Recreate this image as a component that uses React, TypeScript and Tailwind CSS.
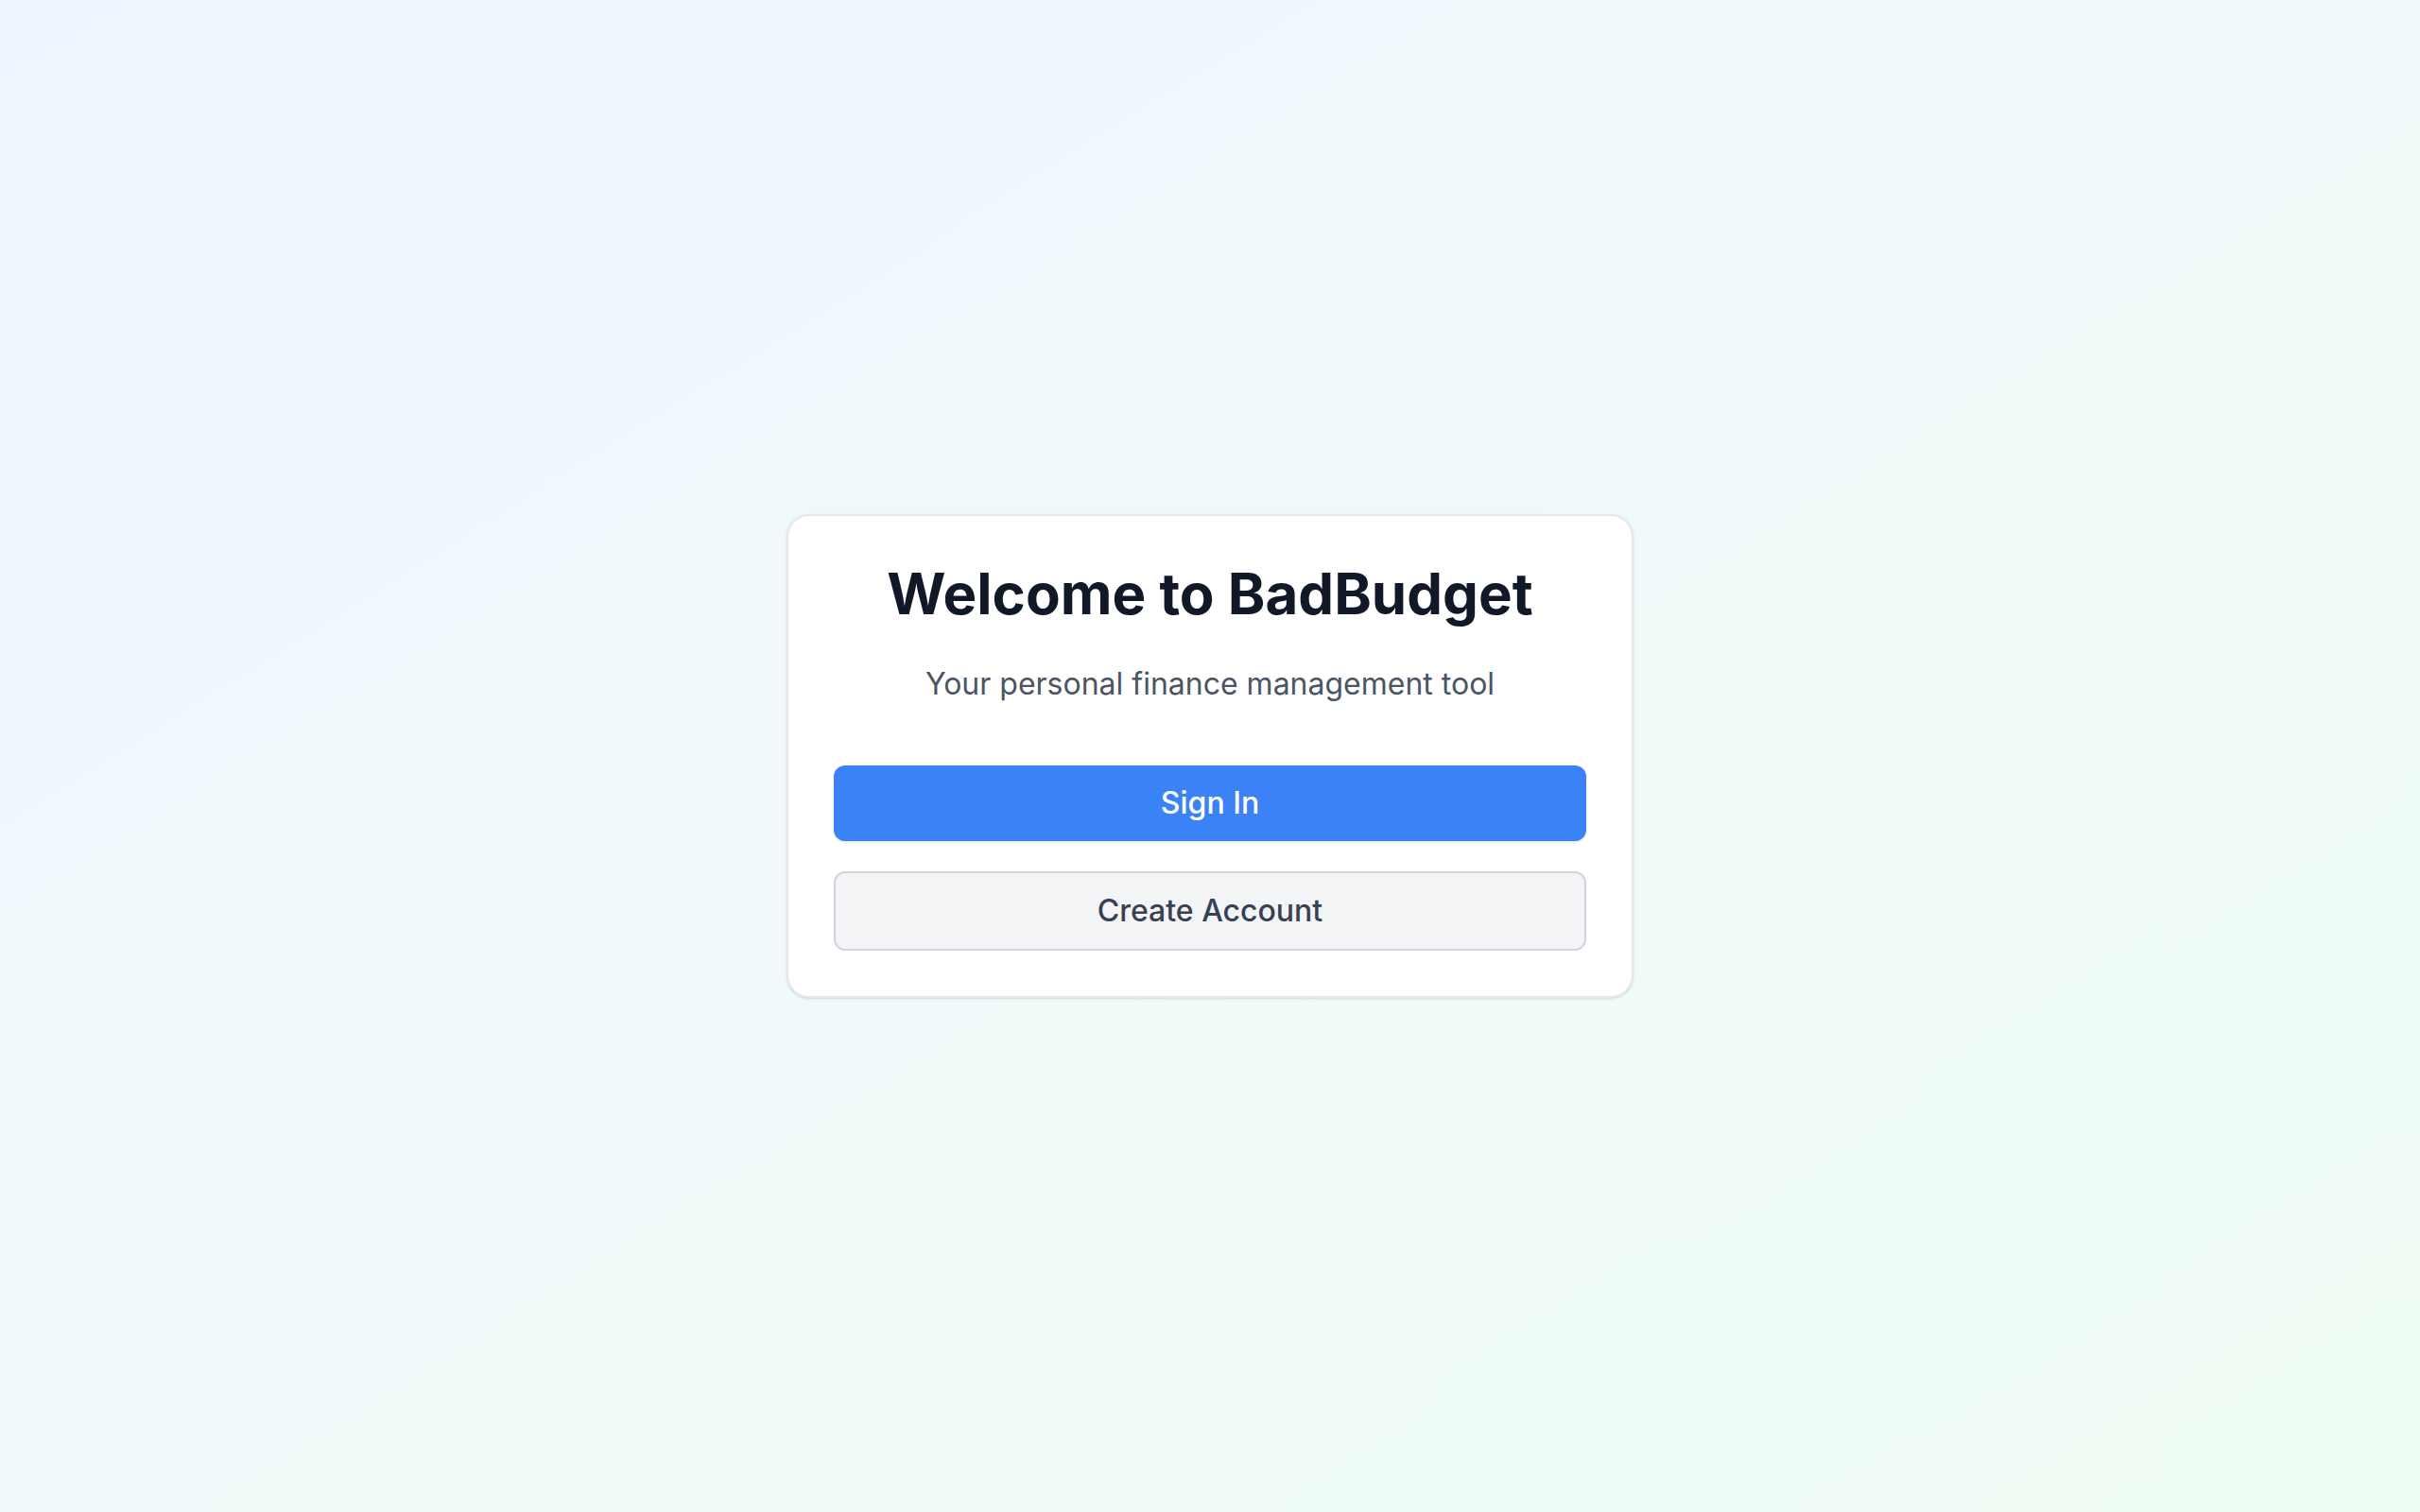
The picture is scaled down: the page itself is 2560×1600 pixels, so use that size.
export default function App() {
  return (
    <div
      className="flex min-h-screen items-center justify-center bg-gradient-to-br from-[#eff6ff] to-[#f0fdf4]"
      style={{ fontFamily: "Inter, 'Noto Sans', sans-serif" }}
    >
      <div className="w-[896px] rounded-[24px] border-2 border-[#e5e7eb] bg-white px-12 pb-12 pt-[46px] text-center shadow-sm">
        <h1 className="mb-[36px] text-[60px] font-bold leading-[72px] text-[#111827]">
          Welcome to BadBudget
        </h1>
        <p className="mb-[62px] text-[32px] leading-[48px] text-[#4b5563]">
          Your personal finance management tool
        </p>
        <div className="flex flex-col gap-8">
          <button className="w-full rounded-[12px] bg-[#3b82f6] py-4 text-[32px] font-medium leading-[48px] text-white shadow-sm">
            Sign In
          </button>
          <button className="w-full rounded-[12px] border-2 border-[#d1d5db] bg-[#f3f4f6] py-4 text-[32px] font-medium leading-[48px] text-[#374151]">
            Create Account
          </button>
        </div>
      </div>
    </div>
  );
}
